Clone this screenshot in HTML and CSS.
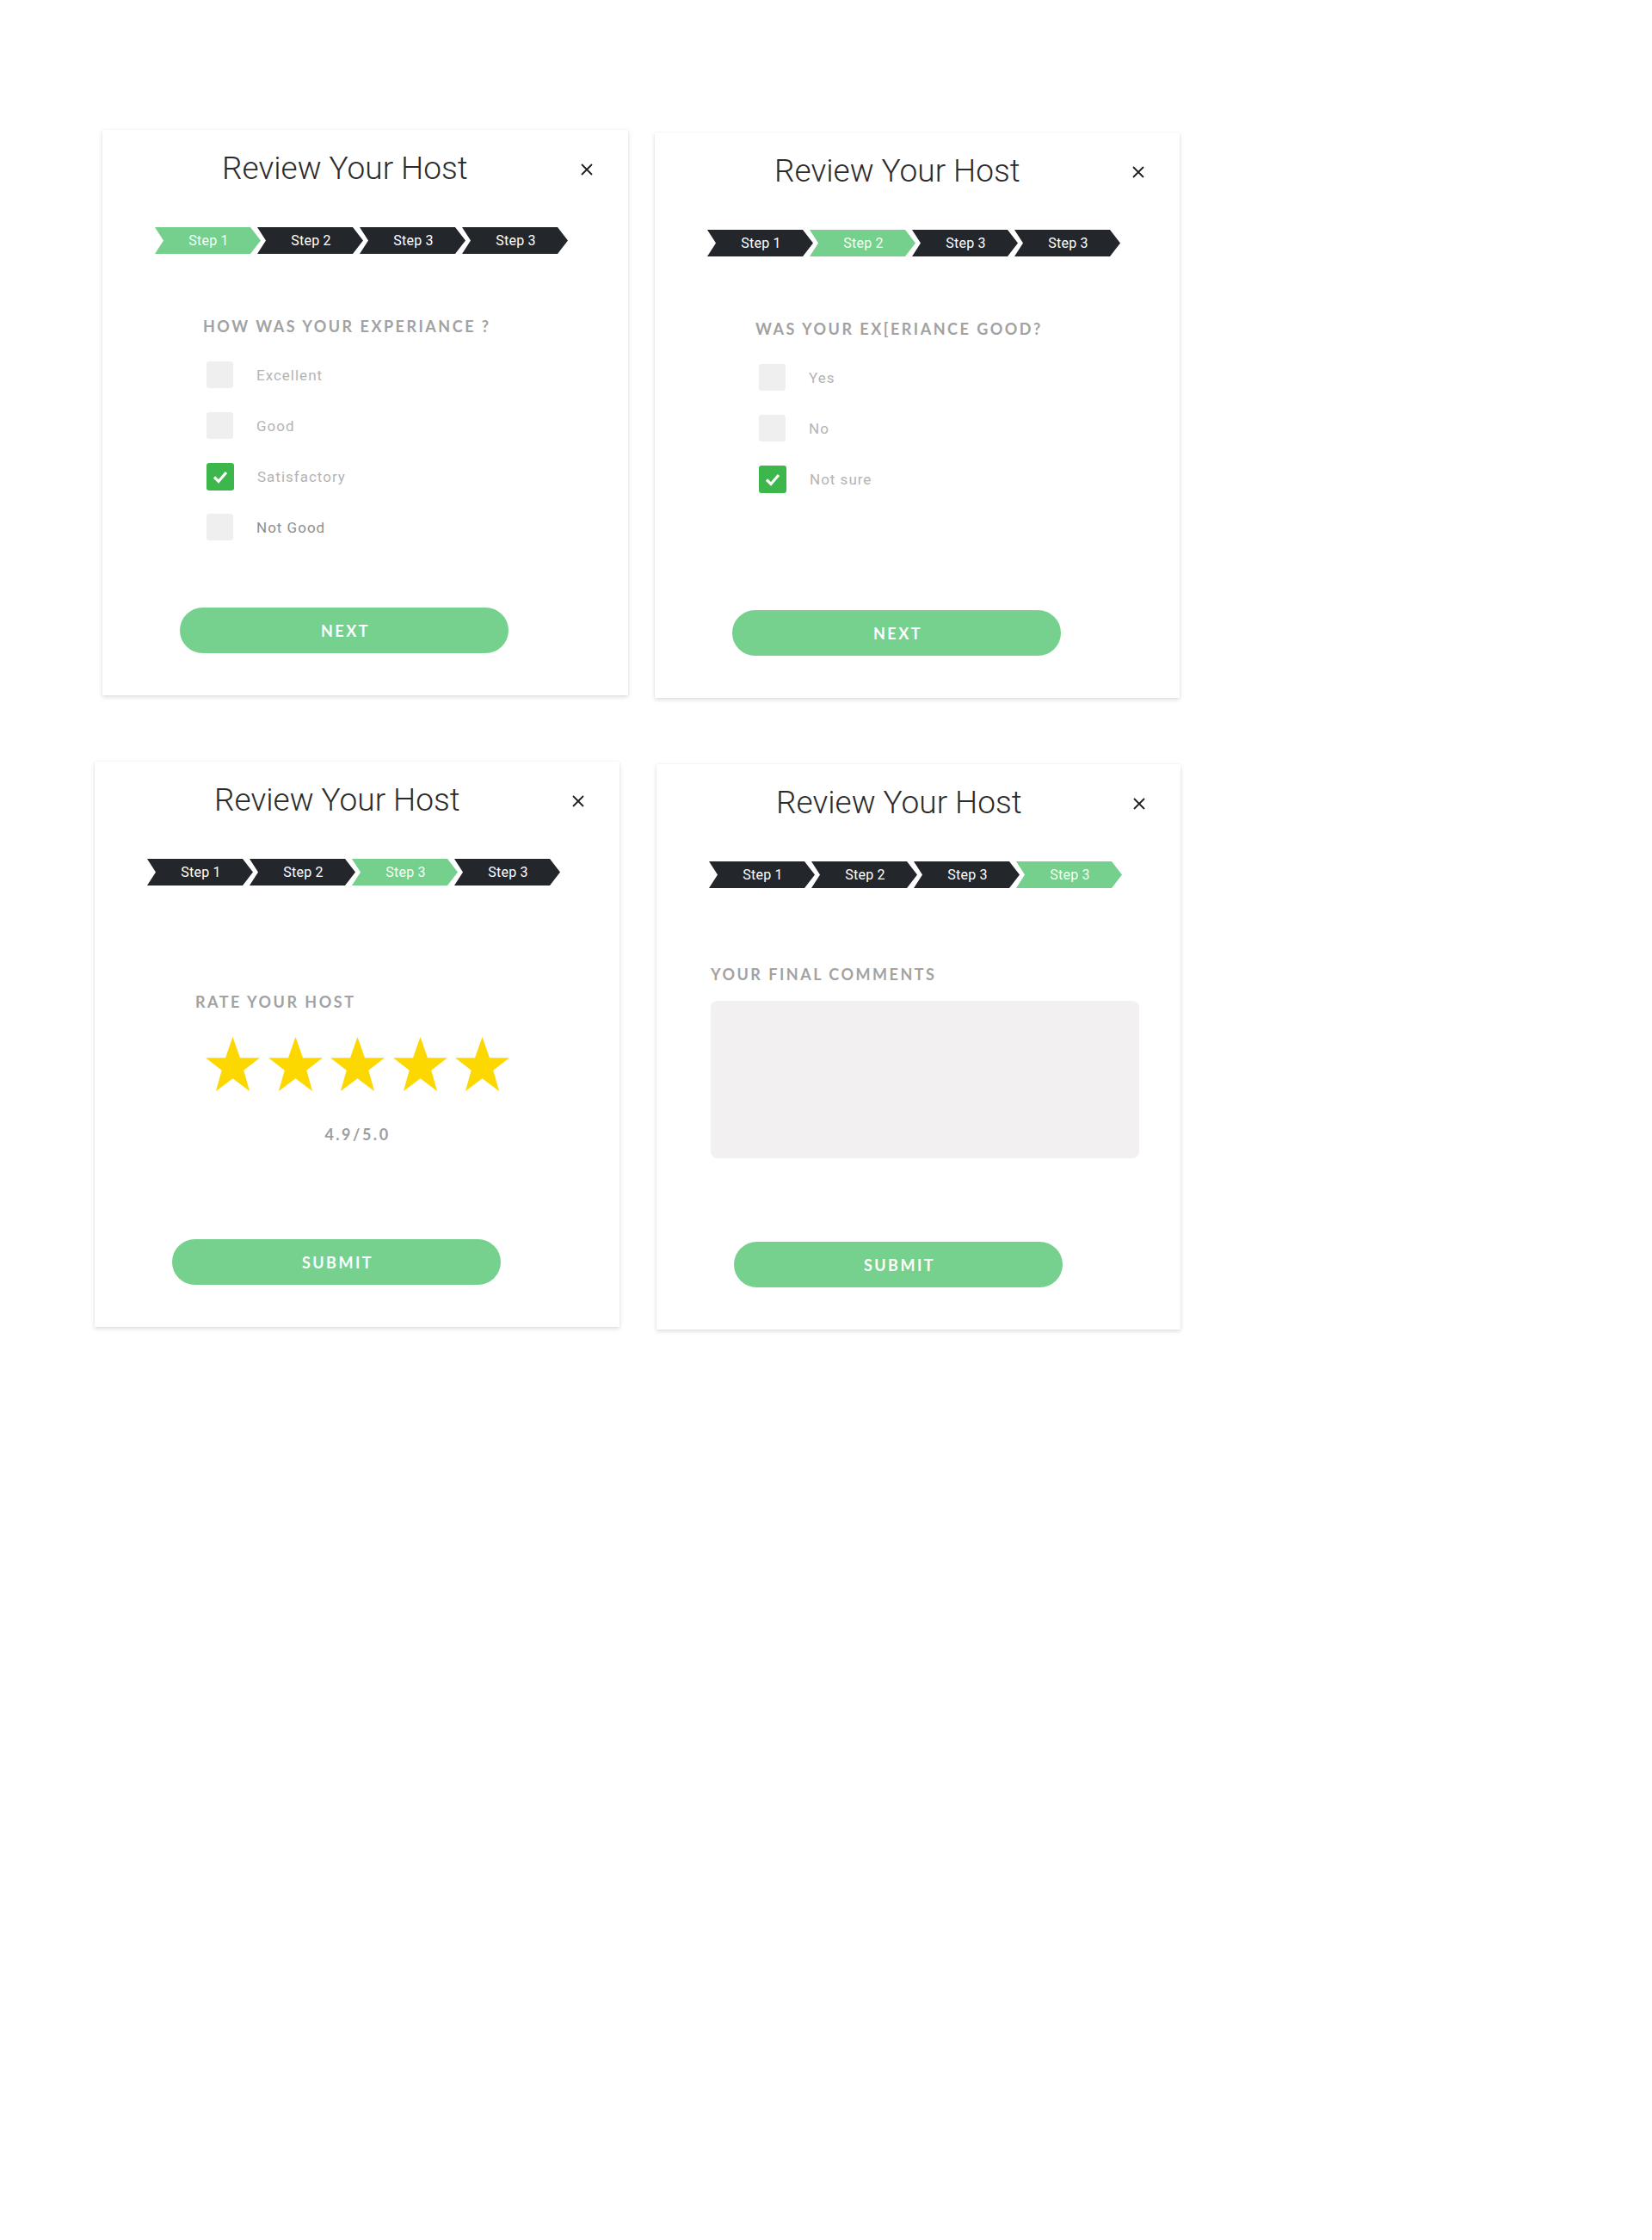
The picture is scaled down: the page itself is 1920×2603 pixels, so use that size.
FILE: index.html
```html
<!DOCTYPE html>
<html lang="en">
<head>
<meta charset="utf-8">
<title>Review Your Host</title>
<link rel="stylesheet" href="styles.css">
</head>
<body>
<div class="board">

  <section class="card">
    <header class="card-head">
      <h1 class="title">Review Your Host</h1>
      <span class="close"><svg viewBox="0 0 14 14" width="14" height="14"><path d="M1 1L13 13M13 1L1 13" stroke="#1f1f1f" stroke-width="1.8" fill="none"/></svg></span>
    </header>
    <div class="steps">
      <span class="step active">Step 1</span>
      <span class="step">Step 2</span>
      <span class="step">Step 3</span>
      <span class="step">Step 3</span>
    </div>
    <h2 class="label label-question">HOW WAS YOUR EXPERIANCE ?</h2>
    <ul class="options">
      <li class="option"><span class="box"></span><span class="opt-text">Excellent</span></li>
      <li class="option"><span class="box"></span><span class="opt-text">Good</span></li>
      <li class="option"><span class="box checked"><svg viewBox="0 0 32 32" width="32" height="32"><path d="M9 16.5L14 21.5L23 11" stroke="#fff" stroke-width="3.2" fill="none"/></svg></span><span class="opt-text">Satisfactory</span></li>
      <li class="option"><span class="box"></span><span class="opt-text dark">Not Good</span></li>
    </ul>
    <button class="btn">NEXT</button>
  </section>

  <section class="card card-b">
    <header class="card-head">
      <h1 class="title">Review Your Host</h1>
      <span class="close"><svg viewBox="0 0 14 14" width="14" height="14"><path d="M1 1L13 13M13 1L1 13" stroke="#1f1f1f" stroke-width="1.8" fill="none"/></svg></span>
    </header>
    <div class="steps">
      <span class="step">Step 1</span>
      <span class="step active">Step 2</span>
      <span class="step">Step 3</span>
      <span class="step">Step 3</span>
    </div>
    <h2 class="label label-question">WAS YOUR EX[ERIANCE GOOD?</h2>
    <ul class="options">
      <li class="option"><span class="box"></span><span class="opt-text">Yes</span></li>
      <li class="option"><span class="box"></span><span class="opt-text">No</span></li>
      <li class="option"><span class="box checked"><svg viewBox="0 0 32 32" width="32" height="32"><path d="M9 16.5L14 21.5L23 11" stroke="#fff" stroke-width="3.2" fill="none"/></svg></span><span class="opt-text">Not sure</span></li>
    </ul>
    <button class="btn">NEXT</button>
  </section>

  <section class="card card-c">
    <header class="card-head">
      <h1 class="title">Review Your Host</h1>
      <span class="close"><svg viewBox="0 0 14 14" width="14" height="14"><path d="M1 1L13 13M13 1L1 13" stroke="#1f1f1f" stroke-width="1.8" fill="none"/></svg></span>
    </header>
    <div class="steps">
      <span class="step">Step 1</span>
      <span class="step">Step 2</span>
      <span class="step active">Step 3</span>
      <span class="step">Step 3</span>
    </div>
    <h2 class="label label-rate">RATE YOUR HOST</h2>
    <div class="rating">
      <div class="stars">
        <svg class="star" viewBox="0 0 100 100"><polygon points="50,0 63.5,38.3 100,38.3 70.3,61.7 81.1,100 50,76.6 18.9,100 29.7,61.7 0,38.3 36.5,38.3"/></svg>
        <svg class="star" viewBox="0 0 100 100"><polygon points="50,0 63.5,38.3 100,38.3 70.3,61.7 81.1,100 50,76.6 18.9,100 29.7,61.7 0,38.3 36.5,38.3"/></svg>
        <svg class="star" viewBox="0 0 100 100"><polygon points="50,0 63.5,38.3 100,38.3 70.3,61.7 81.1,100 50,76.6 18.9,100 29.7,61.7 0,38.3 36.5,38.3"/></svg>
        <svg class="star" viewBox="0 0 100 100"><polygon points="50,0 63.5,38.3 100,38.3 70.3,61.7 81.1,100 50,76.6 18.9,100 29.7,61.7 0,38.3 36.5,38.3"/></svg>
        <svg class="star" viewBox="0 0 100 100"><polygon points="50,0 63.5,38.3 100,38.3 70.3,61.7 81.1,100 50,76.6 18.9,100 29.7,61.7 0,38.3 36.5,38.3"/></svg>
      </div>
      <p class="score">4.9/5.0</p>
    </div>
    <button class="btn">SUBMIT</button>
  </section>

  <section class="card card-d">
    <header class="card-head">
      <h1 class="title">Review Your Host</h1>
      <span class="close"><svg viewBox="0 0 14 14" width="14" height="14"><path d="M1 1L13 13M13 1L1 13" stroke="#1f1f1f" stroke-width="1.8" fill="none"/></svg></span>
    </header>
    <div class="steps">
      <span class="step">Step 1</span>
      <span class="step">Step 2</span>
      <span class="step">Step 3</span>
      <span class="step active">Step 3</span>
    </div>
    <h2 class="label label-comments">YOUR FINAL COMMENTS</h2>
    <div class="comment-box"></div>
    <button class="btn">SUBMIT</button>
  </section>

</div>
</body>
</html>
```

FILE: styles.css
```css
* { box-sizing: border-box; }

body {
  margin: 0;
  background: #ffffff;
  font-family: "Roboto", "Liberation Sans", sans-serif;
}

.board {
  display: grid;
  grid-template-columns: 611px 611px;
  column-gap: 31px;
  row-gap: 74px;
  padding: 151px 0 40px 119px;
  align-items: start;
}

.card {
  display: flex;
  flex-direction: column;
  height: 657px;
  padding-bottom: 49px;
  background: #ffffff;
  box-shadow: 0 2px 5px rgba(0, 0, 0, 0.14), 0 0 1px rgba(0, 0, 0, 0.08);
}

.card-b { margin-top: 3px; width: 610px; }
.card-c { margin-left: -9px; width: 610px; }
.card-d { margin-left: 2px; margin-top: 3px; }

.card-head {
  display: flex;
  align-items: center;
  height: 44px;
  margin-top: 23px;
  padding: 0 41px 0 139px;
}

.title {
  margin: 0;
  font-family: "Roboto", sans-serif;
  font-weight: 300;
  font-size: 37px;
  line-height: 44px;
  color: #2a2a2a;
  letter-spacing: 0;
}

.close {
  margin-left: auto;
  width: 14px;
  height: 14px;
  display: flex;
  margin-top: 2px;
}

.steps {
  display: flex;
  margin: 46px 0 0 61px;
  height: 31px;
}

.step {
  width: 123px;
  height: 31px;
  margin-right: -4px;
  display: flex;
  align-items: center;
  justify-content: center;
  padding-left: 2px;
  background: #23262b;
  color: #ffffff;
  font-family: "Roboto", sans-serif;
  font-size: 16px;
  letter-spacing: 0.2px;
  clip-path: polygon(0 0, calc(100% - 12px) 0, 100% 50%, calc(100% - 12px) 100%, 0 100%, 10px 50%);
}

.step.active {
  background: #74d08c;
  color: #f4fff6;
}

.label {
  margin: 0;
  font-family: "Lato", sans-serif;
  font-weight: 700;
  font-size: 18px;
  line-height: 20px;
  letter-spacing: 2.5px;
  color: #a2a2a2;
}

.label-question { margin: 74px 0 0 117px; }
.label-rate { margin: 125px 0 0 117px; }
.label-comments { margin: 90px 0 0 63px; }

.options {
  list-style: none;
  margin: 17px 0 0 121px;
  padding: 0;
}

.option {
  display: flex;
  align-items: center;
  height: 59px;
}

.box {
  width: 31px;
  height: 31px;
  border-radius: 3px;
  background: #efefef;
  display: flex;
  align-items: center;
  justify-content: center;
}

.box.checked {
  width: 32px;
  height: 32px;
  background: #3db64b;
}

.opt-text {
  margin-left: 27px;
  font-family: "Roboto", sans-serif;
  font-weight: 400;
  font-size: 17px;
  letter-spacing: 1px;
  color: #b4b4b4;
}

.opt-text.dark { color: #8e8e8e; }

.rating {
  display: flex;
  flex-direction: column;
  align-items: center;
  align-self: flex-start;
  margin: 31px 0 0 129px;
}

.stars {
  display: flex;
  gap: 9.5px;
}

.star {
  width: 63px;
  height: 63px;
  fill: #fcd700;
}

.score {
  margin: 40px 0 0;
  font-family: "Lato", sans-serif;
  font-weight: 700;
  font-size: 18px;
  line-height: 20px;
  letter-spacing: 2.5px;
  color: #9e9e9e;
}

.comment-box {
  margin: 21px 0 0 63px;
  width: 498px;
  height: 183px;
  border-radius: 8px;
  background: #f2f0f1;
}

.btn {
  margin: auto 0 0 90px;
  align-self: flex-start;
  width: 382px;
  height: 53px;
  border: none;
  border-radius: 27px;
  background: #76d18e;
  color: #ffffff;
  font-family: "Lato", sans-serif;
  font-weight: 700;
  font-size: 18px;
  letter-spacing: 2.5px;
  padding: 0 0 0 3px;
}
```
